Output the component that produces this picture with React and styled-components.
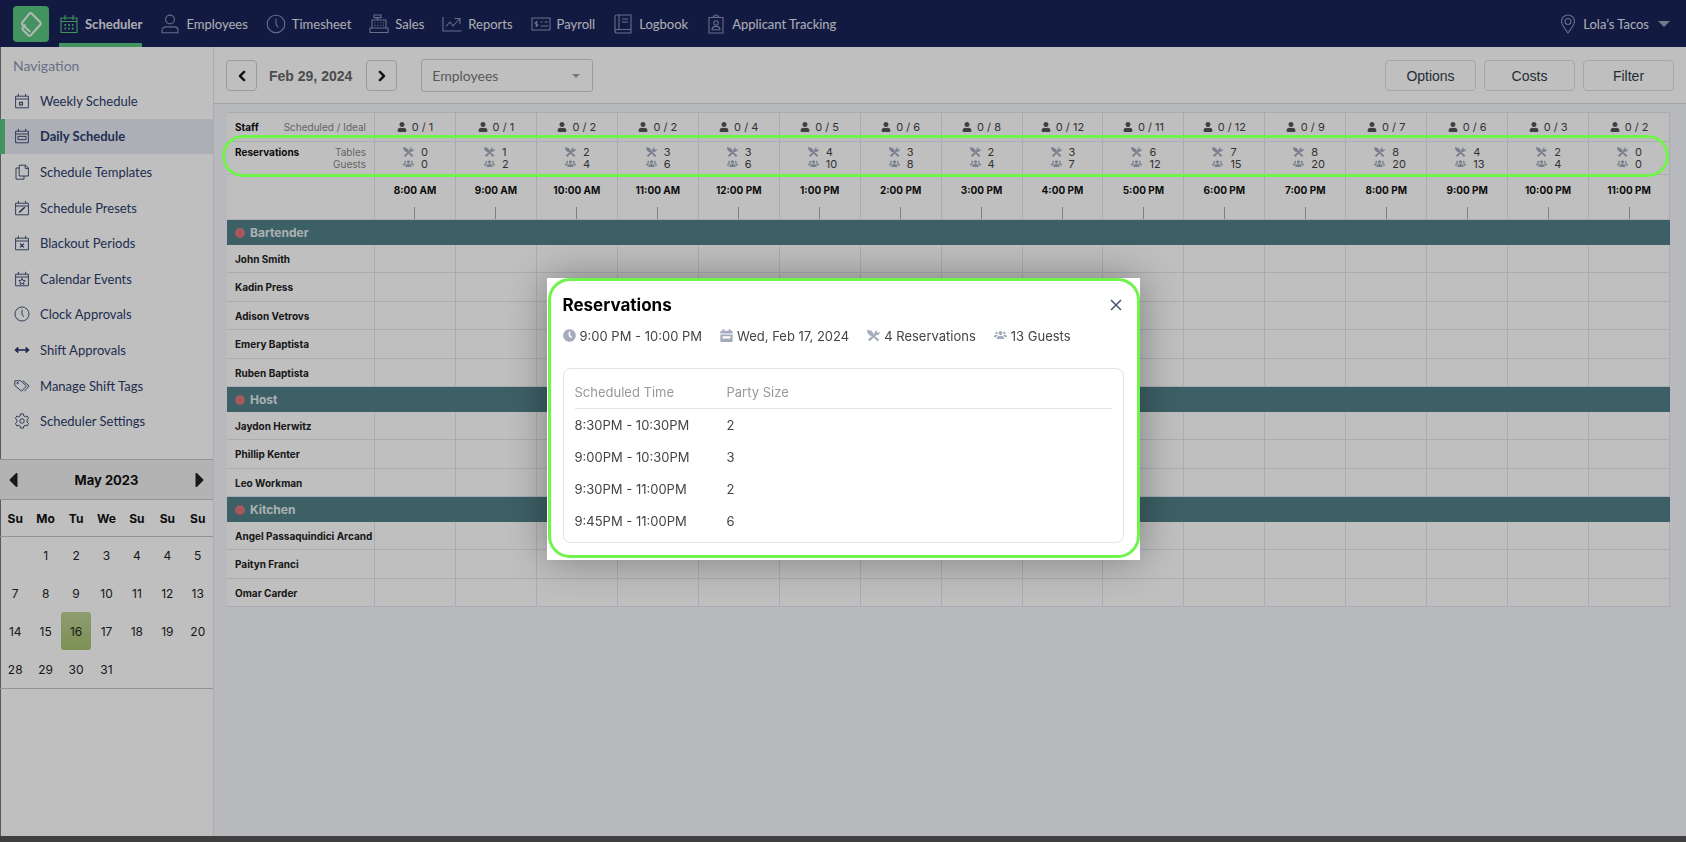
import React from 'react'
import styled, {createGlobalStyle} from 'styled-components'
import {FaChevronLeft, FaChevronRight, FaCaretLeft, FaCaretRight, FaUser, FaClock} from 'react-icons/fa'

const colors = {
    navy: '#182358',
    navText: '#e6e8f0',
    navIcon: '#8b93b8',
    green: '#5ac481',
    lime: '#70f44b',
    ink: '#2c3c6c',
    page: '#f5f7fd',
    line: '#e2e6ef',
    teal: '#518088',
    red: '#dc7779',
    muted: '#a3abbd'
}

const topLinks = [
    {label: 'Scheduler', icon: 'scheduler', active: true},
    {label: 'Employees', icon: 'person'},
    {label: 'Timesheet', icon: 'clock'},
    {label: 'Sales', icon: 'register'},
    {label: 'Reports', icon: 'chart'},
    {label: 'Payroll', icon: 'check'},
    {label: 'Logbook', icon: 'book'},
    {label: 'Applicant Tracking', icon: 'badge'}
]

const sideLinks = [
    {label: 'Weekly Schedule', icon: 'calWeek'},
    {label: 'Daily Schedule', icon: 'calDay', active: true},
    {label: 'Schedule Templates', icon: 'copy'},
    {label: 'Schedule Presets', icon: 'calEdit'},
    {label: 'Blackout Periods', icon: 'calX'},
    {label: 'Calendar Events', icon: 'calStar'},
    {label: 'Clock Approvals', icon: 'clock'},
    {label: 'Shift Approvals', icon: 'arrows'},
    {label: 'Manage Shift Tags', icon: 'tags'},
    {label: 'Scheduler Settings', icon: 'gear'}
]

const weekdays = ['Su', 'Mo', 'Tu', 'We', 'Su', 'Su', 'Su']
const weeks = [
    ['', 1, 2, 3, 4, 4, 5],
    [7, 8, 9, 10, 11, 12, 13],
    [14, 15, 16, 17, 18, 19, 20],
    [28, 29, 30, 31, '', '', '']
]

const hours = [
    {time: '8:00 AM', ideal: 1, tables: 0, guests: 0},
    {time: '9:00 AM', ideal: 1, tables: 1, guests: 2},
    {time: '10:00 AM', ideal: 2, tables: 2, guests: 4},
    {time: '11:00 AM', ideal: 2, tables: 3, guests: 6},
    {time: '12:00 PM', ideal: 4, tables: 3, guests: 6},
    {time: '1:00 PM', ideal: 5, tables: 4, guests: 10},
    {time: '2:00 PM', ideal: 6, tables: 3, guests: 8},
    {time: '3:00 PM', ideal: 8, tables: 2, guests: 4},
    {time: '4:00 PM', ideal: 12, tables: 3, guests: 7},
    {time: '5:00 PM', ideal: 11, tables: 6, guests: 12},
    {time: '6:00 PM', ideal: 12, tables: 7, guests: 15},
    {time: '7:00 PM', ideal: 9, tables: 8, guests: 20},
    {time: '8:00 PM', ideal: 7, tables: 8, guests: 20},
    {time: '9:00 PM', ideal: 6, tables: 4, guests: 13},
    {time: '10:00 PM', ideal: 3, tables: 2, guests: 4},
    {time: '11:00 PM', ideal: 2, tables: 0, guests: 0}
]

const roles = [
    {name: 'Bartender', staff: ['John Smith', 'Kadin Press', 'Adison Vetrovs', 'Emery Baptista', 'Ruben Baptista']},
    {name: 'Host', staff: ['Jaydon Herwitz', 'Phillip Kenter', 'Leo Workman']},
    {name: 'Kitchen', staff: ['Angel Passaquindici Arcand', 'Paityn Franci', 'Omar Carder']}
]

const bookings = [
    {time: '8:30PM - 10:30PM', size: 2},
    {time: '9:00PM - 10:30PM', size: 3},
    {time: '9:30PM - 11:00PM', size: 2},
    {time: '9:45PM - 11:00PM', size: 6}
]

// line icons, all on a 20x20 grid
const calFrame = <path d="M2 4h16v14.5H2zM2 7.5h16M5.5 1V4M14.5 1V4" />

const shapes = {
    scheduler: <><path d="M2 4h16v14.5H2zM2 7.5h16M6 1v5M14 1v5" /><path d="M5.5 11h1.6M9.2 11h1.6M12.9 11h1.6M5.5 14.5h1.6M9.2 14.5h1.6M12.9 14.5h1.6" strokeWidth="1.8" /></>,
    person: <><circle cx="10" cy="5.5" r="4.4" /><path d="M2 18.8v-2.3c0-2.2 1.6-3.6 3.8-3.6h8.4c2.2 0 3.8 1.4 3.8 3.6v2.3z" /></>,
    clock: <><circle cx="10" cy="10" r="8.8" /><path d="M10 4.5V10l2 3.5" /></>,
    register: <><path d="M5 1h7v2.6H5zM8.5 3.6V6M3 6h14v8H3zM1 14h18v4.5H1z" /><path d="M5.5 8.8h1M8.5 8.8h1M11.5 8.8h1M14 8.8h1M5.5 11.4h1M8.5 11.4h1M11.5 11.4h1M14 11.4h1" /></>,
    chart: <path d="M1 3v14h18.5M4 12.5l4-4.5 3 4 6.5-7M12.5 4.5H18V10" />,
    check: <><path d="M1 4h18v12H1zM9.5 8h2M13.5 8H17M9.5 12h7.5" /><path d="M6.8 8H5.2c-1.4 0-1.4 2 0 2h.6c1.4 0 1.4 2 0 2H4.2M5.5 7v6" /></>,
    book: <path d="M3.5 1H18v14.5H4.2c-3 0-3 3.5 0 3.5H18M18 15.5V19M2 17V3c0-1.4.8-2 1.8-2M6 1v14.5M9 5h6M9 8h6" />,
    badge: <><path d="M3 3.5h14V19H3zM7.5 3.5V2h1.3c0-1.4 2.4-1.4 2.4 0h1.3v1.5" /><circle cx="10" cy="9" r="2.2" /><path d="M6 15.8c0-4.6 8-4.6 8 0z" /></>,
    calWeek: <>{calFrame}<path d="M7 11.5h3.5v3.5H7z" strokeWidth="1.4" /></>,
    calDay: <>{calFrame}<path d="M5 10.5h10v4H5z" /></>,
    copy: <path d="M6.5 1.5h8L18 5v10H6.5zM14 1.5V5.5h4M6.5 5H2.5v14h10V15" />,
    calEdit: <>{calFrame}<path d="M6.5 15.5l7-6.5" strokeWidth="1.8" /></>,
    calX: <>{calFrame}<path d="M7.7 10.8l4.6 4.6M12.3 10.8l-4.6 4.6" strokeWidth="1.5" /></>,
    calStar: <>{calFrame}<path d="M10 9.2l1.2 2.6 2.8.3-2.1 1.9.6 2.8-2.5-1.4-2.5 1.4.6-2.8L6 12.1l2.8-.3z" /></>,
    arrows: <><path d="M3 10h14" strokeWidth="2" /><path d="M5 6.5v7L1 10zM15 6.5v7l4-3.5z" fill="currentColor" /></>,
    tags: <><path d="M1 3.5h7.5l7 6.5-6 6.5L1 9.5zM11 3.5l8 6.5-6 6.5" /><circle cx="4.5" cy="6.5" r=".9" /></>,
    gear: <><path d="M8.2 1.2h3.6l.5 2.5 1.8 1 2.4-.9 1.8 3.1-1.9 1.7v2.8l1.9 1.7-1.8 3.1-2.4-.9-1.8 1-.5 2.5H8.2l-.5-2.5-1.8-1-2.4.9-1.8-3.1 1.9-1.7V8.6L1.7 6.9l1.8-3.1 2.4.9 1.8-1z" strokeLinejoin="round" /><circle cx="10" cy="10" r="2.8" /></>,
    pin: <><path d="M10 19C6.5 14 3.5 11 3.5 7.5a6.5 6.5 0 0113 0C16.5 11 13.5 14 10 19z" /><circle cx="10" cy="7.5" r="3" /></>
}

function LineIcon({name}) {
    return <Line viewBox="0 0 20 20" aria-hidden="true">{shapes[name]}</Line>
}

function Utensils() {
    return (
        <Glyph viewBox="0 0 20 18" aria-hidden="true">
            <path d="M0 0l6.5 1.5 3.5 4 .2 2.6 8.8 7.3-2.8 2.6-8.3-8.4-2.6-.2L1 5.5z" />
            <path d="M1.5 15.3L11.6 6.6c-.8-2.3 1-5 4.6-6.6l-1.5 3.3 1.8 1.7L20 3c-.4 4.3-3.5 6.4-6.2 5.5L4.3 18z" />
        </Glyph>
    )
}

function Guests() {
    return (
        <Glyph viewBox="0 0 20 18" aria-hidden="true">
            <circle cx="10" cy="5.2" r="3" />
            <circle cx="4" cy="5" r="1.8" />
            <circle cx="16" cy="5" r="1.8" />
            <path d="M4.2 14.5c0-3.6 1.8-5.3 5.8-5.3s5.800 1.700 5.800 5.300zM0 11.500C0 8.800 1 7.700 3.500 7.700c1.200 0 2 .2 2.600.8-1.500.8-2.400 1.700-2.700 3zM20 11.500c0-2.700-1-3.800-3.500-3.800-1.200 0-2 .2-2.600.8 1.500.8 2.400 1.700 2.700 3z" />
        </Glyph>
    )
}

function DayIcon() {
    return (
        <Glyph viewBox="0 0 20 20" aria-hidden="true">
            <path d="M4 0h2.5v2.5h7V0H16v2.5h2a1.5 1.5 0 011.5 1.5v3H.5V4A1.5 1.5 0 012 2.5h2zM.5 8.5h19v10A1.5 1.5 0 0118 20H2a1.5 1.5 0 01-1.5-1.5zM4 11v3.5h12V11z" fillRule="evenodd" />
        </Glyph>
    )
}

function TopBar() {
    return (
        <Header>
            <Logo href="#" aria-label="Home">
                <svg viewBox="0 0 36 36" aria-hidden="true">
                    <path d="M9.5 16.2l6.7-8.4q1.3-1.5 2.7 0l8.4 8.4q1.2 1.3 0 2.6l-9.6 10.4q-1.2 1.2-2.5 0l-5.2-5.3q-1.2-1.4 0-2.6l2.6-2.7M9.5 16.2q-1.2 1.4 0 2.600l7.800 7.200" />
                </svg>
            </Logo>
            <TopNav>
                {
                    topLinks.map(link => (
                        <TopLink key={link.label} href="#" $active={link.active}>
                            <LineIcon name={link.icon}/>{link.label}
                        </TopLink>
                    ))
                }
            </TopNav>
            <Location type="button"><LineIcon name="pin"/>Lola’s Tacos<Caret $size={6}/></Location>
        </Header>
    )
}

function Sidebar() {
    return (
        <Side>
            <SideTitle>Navigation</SideTitle>
            <SideNav>
                {
                    sideLinks.map(link => (
                        <SideLink key={link.label} href="#" $active={link.active}>
                            <LineIcon name={link.icon}/>{link.label}
                        </SideLink>
                    ))
                }
            </SideNav>
            <MonthBar>
                <button type="button" aria-label="Previous month"><FaCaretLeft/></button>
                <h2>May 2023</h2>
                <button type="button" aria-label="Next month"><FaCaretRight/></button>
            </MonthBar>
            <Month>
                <thead>
                    <tr>{weekdays.map((day, i) => <th key={i}>{day}</th>)}</tr>
                </thead>
                <tbody>
                    {
                        weeks.map((week, i) => (
                            <tr key={i}>
                                {week.map((day, j) => <Day key={j} $today={day === 16}>{day}</Day>)}
                            </tr>
                        ))
                    }
                </tbody>
            </Month>
        </Side>
    )
}

function Toolbar() {
    return (
        <Tools>
            <IconButton type="button" aria-label="Previous day"><FaChevronLeft/></IconButton>
            <DateLabel>Feb 29, 2024</DateLabel>
            <IconButton type="button" aria-label="Next day"><FaChevronRight/></IconButton>
            <SelectBox>
                <select aria-label="Group by" defaultValue="Employees">
                    <option>Employees</option>
                </select>
                <Caret $size={4}/>
            </SelectBox>
            <Actions>
                <ToolButton type="button">Options</ToolButton>
                <ToolButton type="button">Costs</ToolButton>
                <ToolButton type="button">Filter</ToolButton>
            </Actions>
        </Tools>
    )
}

function ScheduleGrid() {
    return (
        <Grid>
            <thead>
                <StaffRow>
                    <LabelCell scope="row"><LabelLine><b>Staff</b><span>Scheduled / Ideal</span></LabelLine></LabelCell>
                    {hours.map(h => <td key={h.time}><Staffing><FaUser/>0 / {h.ideal}</Staffing></td>)}
                </StaffRow>
                <ReservationRow>
                    <LabelCell scope="row">
                        <LabelLine><b>Reservations</b><span>Tables<br/>Guests</span></LabelLine>
                        <RowRing/>
                    </LabelCell>
                    {
                        hours.map(h => (
                            <td key={h.time}>
                                <Count><Utensils/>{h.tables}</Count>
                                <Count><Guests/>{h.guests}</Count>
                            </td>
                        ))
                    }
                </ReservationRow>
                <HourRow>
                    <LabelCell as="td"/>
                    {hours.map(h => <th key={h.time} scope="col"><Hour>{h.time}<i/></Hour></th>)}
                </HourRow>
            </thead>
            {
                roles.map(role => (
                    <Group key={role.name}>
                        <tr><RoleCell colSpan={17} scope="rowgroup"><Dot/>{role.name}</RoleCell></tr>
                        {
                            role.staff.map(person => (
                                <tr key={person}>
                                    <NameCell scope="row">{person}</NameCell>
                                    {hours.map(h => <td key={h.time}/>)}
                                </tr>
                            ))
                        }
                    </Group>
                ))
            }
        </Grid>
    )
}

function ReservationsDialog() {
    return (
        <Overlay>
            <Dialog role="dialog" aria-modal="true" aria-labelledby="reservations-title">
                <DialogHead>
                    <h1 id="reservations-title">Reservations</h1>
                    <CloseButton type="button" aria-label="Close">
                        <svg viewBox="0 0 12 12" aria-hidden="true"><path d="M1 1l10 10M11 1L1 11"/></svg>
                    </CloseButton>
                </DialogHead>
                <Facts>
                    <span><FaClock/>9:00 PM - 10:00 PM</span>
                    <span><DayIcon/>Wed, Feb 17, 2024</span>
                    <span><Utensils/>4 Reservations</span>
                    <span><Guests/>13 Guests</span>
                </Facts>
                <BookingCard>
                    <Bookings>
                        <thead>
                            <tr><th>Scheduled Time</th><th>Party Size</th></tr>
                        </thead>
                        <tbody>
                            {bookings.map(b => <tr key={b.time}><td>{b.time}</td><td>{b.size}</td></tr>)}
                        </tbody>
                    </Bookings>
                </BookingCard>
            </Dialog>
        </Overlay>
    )
}

export default function App() {
    return (
        <>
            <GlobalStyle/>
            <Page>
                <TopBar/>
                <Body>
                    <Sidebar/>
                    <Main>
                        <Toolbar/>
                        <GridArea><ScheduleGrid/></GridArea>
                    </Main>
                </Body>
            </Page>
            <ReservationsDialog/>
        </>
    )
}

const GlobalStyle = createGlobalStyle`
    *{
        box-sizing: border-box;
    }
    body{
        margin: 0;
        font-family: Inter, sans-serif;
        color: #222;
    }
    button, select{
        font: inherit;
        color: inherit;
    }
    a{
        color: inherit;
        text-decoration: none;
    }
    h1, h2{
        margin: 0;
    }
    table{
        border-spacing: 0;
    }
`

const Page = styled.div`
    min-height: 100vh;
    display: flex;
    flex-direction: column;
    background: ${colors.page};
    border-bottom: 6px solid #545454;
`

const Line = styled.svg`
    width: 20px;
    height: 20px;
    flex: none;
    fill: none;
    stroke: currentColor;
    stroke-width: 1.1;
`

const Glyph = styled.svg`
    width: 14px;
    height: 14px;
    flex: none;
    fill: ${colors.muted};
`

const Caret = styled.span`
    border: ${({$size}) => $size}px solid transparent;
    border-top-color: #98a2b8;
    border-bottom: 0;
`

const Header = styled.header`
    height: 47px;
    display: flex;
    align-items: center;
    padding: 0 16px 0 13px;
    background: ${colors.navy};
    color: ${colors.navText};
    font-family: Lato, sans-serif;
    font-size: 13px;
`

const Logo = styled.a`
    width: 36px;
    height: 36px;
    border-radius: 4px;
    background: ${colors.green};

    svg{
        display: block;
        fill: none;
        stroke: #f2f6f3;
        stroke-width: 2;
        stroke-linejoin: round;
    }
`

const TopNav = styled.nav`
    flex: 1;
    align-self: stretch;
    display: flex;
    gap: 18px;
    margin-left: 10px;
`

const TopLink = styled.a`
    display: flex;
    align-items: center;
    gap: 6px;
    padding-top: 4px;
    border-bottom: 4px solid ${({$active}) => $active ? colors.green : 'transparent'};
    font-weight: ${({$active}) => $active ? 700 : 400};
    white-space: nowrap;

    svg{
        color: ${({$active}) => $active ? colors.green : colors.navIcon};
    }
`

const Location = styled.button`
    display: flex;
    align-items: center;
    gap: 5px;
    padding: 0;
    border: 0;
    background: none;

    svg{
        color: ${colors.navIcon};
    }
    span{
        margin-left: 4px;
    }
`

const Body = styled.div`
    flex: 1;
    display: flex;
`

const Side = styled.aside`
    width: 214px;
    flex: none;
    background: #fff;
    border-right: 1px solid ${colors.line};
    box-shadow: inset 1px 0 #777;
`

const SideTitle = styled.div`
    padding: 10px 13px 8px;
    font: 14px/18px Lato, sans-serif;
    color: #8d97b5;
`

const SideNav = styled.nav`
    min-height: 356px;
    display: grid;
    grid-auto-rows: 1fr;
    margin-bottom: 20px;
    font-family: Lato, sans-serif;
    font-size: 13px;
    color: ${colors.ink};
`

const SideLink = styled.a`
    display: flex;
    align-items: center;
    gap: 10px;
    padding-left: 9px;
    border-left: 5px solid ${({$active}) => $active ? colors.green : 'transparent'};
    background: ${({$active}) => $active ? '#e6ebf3' : 'none'};
    font-weight: ${({$active}) => $active ? 700 : 400};

    svg{
        width: 16px;
        height: 16px;
    }
`

const MonthBar = styled.div`
    height: 41px;
    display: flex;
    align-items: center;
    justify-content: space-between;
    padding: 0 6px;
    background: #efefef;
    border-top: 1px solid #c4c4c4;
    border-bottom: 1px solid #c4c4c4;

    h2{
        font-size: 13px;
        color: #111;
    }
    button{
        display: flex;
        padding: 0;
        border: 0;
        background: none;
        font-size: 24px;
        color: #222;
    }
    svg{
        width: 14px;
    }
`

const Month = styled.table`
    width: 100%;
    table-layout: fixed;
    border-bottom: 1px solid #c4c4c4;
    font-size: 12px;
    text-align: center;

    th{
        height: 37px;
        padding: 0;
        border-bottom: 1px solid #c4c4c4;
        color: #111;
    }
`

const Day = styled.td`
    height: 38px;
    padding: 0;
    border-radius: 3px;
    background: ${({$today}) => $today ? 'linear-gradient(#bdd295, #a6c070)' : 'none'};

    tr:first-child > &{
        height: 37px;
    }
`

const Main = styled.main`
    flex: 1;
    min-width: 0;
`

const Tools = styled.div`
    height: 57px;
    display: flex;
    align-items: center;
    gap: 12px;
    padding: 1px 12px 0;
    background: #fff;
    border-bottom: 1px solid #d6d8dd;
`

const IconButton = styled.button`
    width: 31px;
    height: 31px;
    display: flex;
    align-items: center;
    justify-content: center;
    padding: 0;
    border: 1px solid #cfcfcf;
    border-radius: 4px;
    background: #fff;
    font-size: 12px;
    color: #111;

    svg{
        stroke: currentColor;
        stroke-width: 30px;
    }
`

const DateLabel = styled.strong`
    padding-right: 2px;
    font: bold 14px "Liberation Sans", sans-serif;
    color: #666;
`

const SelectBox = styled.div`
    width: 172px;
    height: 33px;
    display: flex;
    align-items: center;
    margin-left: 12px;
    padding: 0 12px 0 0;
    border: 1px solid #cfcfcf;
    border-radius: 3px;

    select{
        flex: 1;
        height: 100%;
        padding: 0 10px;
        appearance: none;
        border: 0;
        background: none;
        font: 14px Lato, sans-serif;
        color: #777;
    }
`

const Actions = styled.div`
    display: flex;
    gap: 8px;
    margin-left: auto;
`

const ToolButton = styled.button`
    width: 91px;
    height: 31px;
    padding: 0;
    border: 1px solid #dedede;
    border-radius: 4px;
    background: #fff;
    font: 14px "Liberation Sans", sans-serif;
    color: #343b48;
`

const GridArea = styled.div`
    padding: 8px 16px 24px 13px;
`

const Grid = styled.table`
    width: 100%;
    table-layout: fixed;
    border-top: 1px solid ${colors.line};
    background: #fff;
    font-size: 11px;

    th, td{
        padding: 0;
        border-right: 1px solid ${colors.line};
        border-bottom: 1px solid ${colors.line};
    }
`

const StaffRow = styled.tr`
    height: 29px;
`

const ReservationRow = styled.tr`
    height: 33px;
    position: relative;
`

// ring round the whole row, above the page shade
const RowRing = styled.span`
    position: absolute;
    z-index: 20;
    inset: -7px 1px -2px -5px;
    border: 3px solid ${colors.lime};
    border-radius: 21px;
    pointer-events: none;
`

const HourRow = styled.tr`
    height: 45px;
`

const LabelCell = styled.th`
    width: 148px;
`

const LabelLine = styled.div`
    display: flex;
    justify-content: space-between;
    padding: 0 8px;
    font-size: 10px;
    font-weight: 400;
    line-height: 12px;
    text-align: right;

    b{
        font-weight: 700;
        color: #111;
    }
    span{
        color: #888;
    }
`

const Staffing = styled.div`
    display: flex;
    align-items: center;
    justify-content: center;
    gap: 5px;
    color: #444;

    svg{
        font-size: 10px;
        color: #555;
    }
`

const Count = styled.div`
    display: flex;
    align-items: center;
    gap: 7px;
    padding-left: 28px;
    line-height: 12px;
    color: #444;

    svg{
        width: 11px;
        height: 10px;
    }
`

const Hour = styled.div`
    height: 44px;
    display: flex;
    flex-direction: column;
    align-items: center;
    justify-content: space-between;
    padding-top: 9px;
    font-size: 10px;
    font-weight: 700;
    color: #111;

    i{
        height: 12px;
        border-left: 1px solid #aaa;
    }
`

const Group = styled.tbody`
    tr{
        height: 28px;
    }
    tr:nth-child(odd){
        height: 29px;
    }
    tr:first-child{
        height: 25px;
    }
`

const RoleCell = styled.th`
    && {
        padding-left: 8px;
        border-color: ${colors.teal};
    }
    background: ${colors.teal};
    font-size: 12px;
    text-align: left;
    color: #e3edee;
`

const Dot = styled.span`
    display: inline-block;
    width: 10px;
    height: 10px;
    margin-right: 5px;
    border-radius: 50%;
    background: ${colors.red};
    vertical-align: -1px;
`

const NameCell = styled.th`
    && {
        padding-left: 8px;
    }
    font-size: 10px;
    font-weight: 700;
    text-align: left;
    white-space: nowrap;
    color: #222;
`

const Overlay = styled.div`
    position: fixed;
    inset: 0;
    z-index: 10;
    display: flex;
    align-items: center;
    justify-content: center;
    padding-bottom: 5px;
    background: rgba(0,0,0, 0.25);
`

const Dialog = styled.section`
    position: relative;
    width: 593px;
    max-width: 100%;
    padding: 16px 16px 17px;
    background: #fff;
    box-shadow: 0 0 40px rgba(0,0,0, 0.35);
    font-size: 13px;

    &::after{
        content: '';
        position: absolute;
        inset: 0 0 2px 1px;
        border: 3px solid ${colors.lime};
        border-radius: 22px;
        pointer-events: none;
    }
`

const DialogHead = styled.div`
    display: flex;
    align-items: center;
    justify-content: space-between;

    h1{
        font-size: 17px;
        line-height: 22px;
        color: #000;
    }
`

const CloseButton = styled.button`
    display: flex;
    padding: 2px;
    border: 0;
    background: none;

    svg{
        width: 12px;
        height: 12px;
        fill: none;
        stroke: #4d5872;
        stroke-width: 1.6;
    }
`

const Facts = styled.div`
    display: flex;
    gap: 18px;
    padding: 11px 0 23px;
    line-height: 18px;
    color: #444;

    span{
        display: flex;
        align-items: center;
        gap: 4px;
    }
    svg{
        width: 13px;
        height: 13px;
        color: ${colors.muted};
    }
`

const BookingCard = styled.div`
    padding: 7px 11px 5px;
    border: 1px solid #e2e3ec;
    border-radius: 8px;
`

const Bookings = styled.table`
    width: 100%;
    text-align: left;
    color: #444;

    th{
        height: 33px;
        padding: 0;
        border-bottom: 1px solid #e2e3ec;
        font-weight: 400;
        color: #999;
    }
    th:first-child{
        width: 152px;
    }
    td{
        height: 32px;
        padding: 0;
    }
`
